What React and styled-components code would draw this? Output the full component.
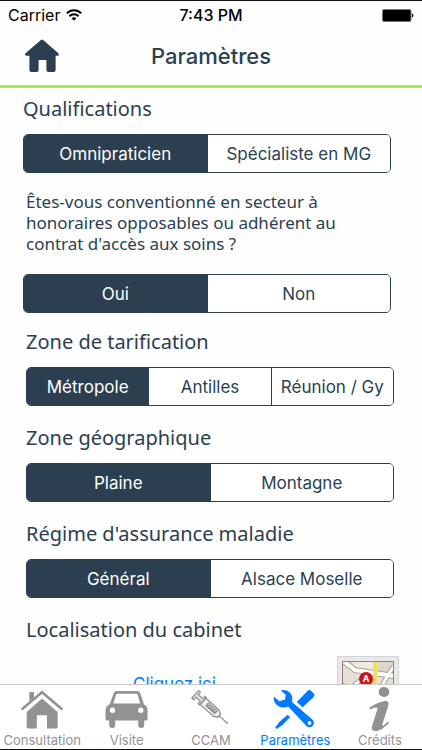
import { useState } from "react";
import styled, { createGlobalStyle } from "styled-components";

const navy = "#2b3f50";
const green = "#a4ec50";
const blue = "#007aff";
const grey = "#929292";

const GlobalStyle = createGlobalStyle`
  * {
    box-sizing: border-box;
  }
  body {
    margin: 0;
    background: #fff;
    font-family: Inter, "Liberation Sans", sans-serif;
  }
  button {
    font-family: inherit;
    cursor: pointer;
  }
`;

const Screen = styled.div`
  display: flex;
  flex-direction: column;
  height: 100vh;
  border-top: 1px solid #111;
  border-bottom: 1px solid #111;
  background: #fefefe;
`;

const StatusBar = styled.div`
  display: grid;
  grid-template-columns: 1fr auto 1fr;
  align-items: center;
  height: 28px;
  padding: 0 8px;
  font-size: 16px;
  color: #000;
`;

const Carrier = styled.div`
  display: flex;
  align-items: center;
  gap: 6px;
`;

const Clock = styled.time`
  font-weight: 500;
`;

const Battery = styled.svg`
  justify-self: end;
`;

const Header = styled.header`
  display: grid;
  grid-template-columns: 36px 1fr 36px;
  align-items: center;
  height: 59px;
  padding: 0 24px 3px;
  border-bottom: 3px solid ${green};
`;

const HomeButton = styled.button`
  display: flex;
  padding: 0;
  border: 0;
  background: none;
  color: ${navy};
`;

const Title = styled.h1`
  margin: 0;
  font-size: 22px;
  line-height: 28px;
  font-weight: 500;
  text-align: center;
  color: ${navy};
`;

const Content = styled.main`
  flex: 1;
  min-height: 0;
  overflow-y: auto;
  scrollbar-width: none;
`;

const Section = styled.section`
  padding: ${(p) => (p.$wide ? "6px 31px 14px 23px" : "0 28px 17px 26px")};
`;

const Heading = styled.h2`
  margin: 0 0 10px;
  font-family: "Noto Sans", "Open Sans", sans-serif;
  font-size: 20px;
  line-height: 30px;
  font-weight: 400;
  color: ${navy};
`;

const Question = styled.p`
  margin: 0;
  padding: 18px 0 20px 3px;
  font-family: "Noto Sans", "Open Sans", sans-serif;
  font-size: 17px;
  line-height: 21px;
  color: ${navy};
`;

const Segments = styled.div`
  display: flex;
  height: 39px;
  border: 1px solid ${navy};
  border-radius: 5px;
  overflow: hidden;
`;

const Segment = styled.button`
  flex: 1 1 0;
  min-width: 0;
  padding: 0;
  border: 0;
  background: ${(p) => (p.$active ? navy : "#fff")};
  color: ${(p) => (p.$active ? "#fff" : navy)};
  font-size: 17px;
  white-space: nowrap;
  & + & {
    border-left: 1px solid ${navy};
  }
`;

const LocationHeading = styled(Heading)`
  margin: 0;
  padding: 0 28px 0 26px;
`;

const LocationRow = styled.div`
  display: flex;
  align-items: center;
  gap: 14px;
  padding: 11px 23px 16px 26px;
`;

const LinkCell = styled.div`
  flex: 1;
  text-align: center;
`;

const Link = styled.a`
  font-size: 17px;
  color: ${blue};
  text-decoration: none;
`;

const MapButton = styled.button`
  display: flex;
  padding: 4px;
  border: 1px solid #d3d3d6;
  background: #e9e9ec;
`;

const TabBar = styled.nav`
  display: flex;
  height: 65px;
  border-top: 1px solid #c9c9c9;
  background: #fff;
`;

const Tab = styled.button`
  flex: 1 1 0;
  min-width: 0;
  display: flex;
  flex-direction: column;
  align-items: center;
  padding: 1px 0 0;
  border: 0;
  background: none;
  color: ${(p) => (p.$active ? blue : grey)};
  font-size: 13px;
  line-height: 16px;
  white-space: nowrap;
`;

const WifiIcon = () => (
  <svg width="16" height="12" viewBox="0 0 16 12" fill="none" stroke="#000" strokeWidth="2">
    <path d="M0.8 4.4C4.8 0.2 11.2 0.2 15.2 4.4" />
    <path d="M3.4 7.2C6 4.6 10 4.6 12.6 7.2" />
    <path d="M5.6 9.2C7 7.9 9 7.9 10.4 9.2L8 11.8Z" fill="#000" stroke="none" />
  </svg>
);

const BatteryIcon = () => (
  <Battery width="32" height="13" viewBox="0 0 32 13">
    <rect x="0.5" y="0.5" width="28.5" height="12" rx="1.5" stroke="#777" />
    <path d="M30 4.5C31.8 4.8 31.8 8.2 30 8.5Z" />
  </Battery>
);

const HomeIcon = () => (
  <svg width="36" height="34" viewBox="0 0 36 34" fill="currentColor">
    <path d="M16.9 0.9Q18 0 19.1 0.9L34.4 14.2Q35.4 15.2 34.6 16.2Q34.2 16.8 33 16.8H31.6V31Q31.6 33 29.6 33H24.4Q22.4 33 22.4 31V21H14.6V31Q14.6 33 12.6 33H7.4Q5.4 33 5.4 31V16.8H3Q1.8 16.8 1.4 16.2Q0.6 15.2 1.6 14.2Z" />
  </svg>
);

const MapIcon = () => (
  <svg width="52" height="46" viewBox="0 0 52 46">
    <rect width="52" height="46" fill="#e6dfd3" />
    <path d="M10 0H31V13L14 9Z" fill="#efeae2" />
    <path d="M37 0H52V14L37 12Z" fill="#ddd6ca" />
    <path d="M0 -1L13 9L52 15" stroke="#a99c96" strokeWidth="6" fill="none" />
    <path d="M0 34L20 18L34 11M28 46L46 14L52 5M0 24L12 30L46 46" stroke="#a99c96" strokeWidth="5" fill="none" />
    <path d="M0 -1L13 9L52 15" stroke="#fff" strokeWidth="4" fill="none" />
    <path d="M0 34L20 18L34 11M28 46L46 14L52 5M0 24L12 30L46 46" stroke="#fff" strokeWidth="3" fill="none" />
    <path d="M33.500 0V13L28 46" stroke="#f3df5c" strokeWidth="4" fill="none" />
    <rect x="0.500" y="0.500" width="51" height="45" fill="none" stroke="#96807c" />
    <circle cx="24" cy="18" r="7" fill="#c5161d" />
    <text x="24" y="21" fill="#fff" fontSize="9" fontWeight="700" textAnchor="middle">
      A
    </text>
  </svg>
);

const TabIcon = ({ children }) => (
  <svg width="44" height="46" viewBox="0 0 44 46" fill="currentColor">
    {children}
  </svg>
);

const tabs = [
  {
    label: "Consultation",
    icon: (
      <>
        <path d="M9.300 15.500V7Q9.300 6 10.300 6H13Q14 6 14 7V11.500Z" />
        <path d="M2.500 22.800L22 6.300L41.500 22.800" fill="none" stroke="currentColor" strokeWidth="2.600" strokeLinecap="round" />
        <path d="M22 12.600L37.700 26V41Q37.700 42.600 36 42.600H27V29.300H16.800V42.600H8.400Q6.700 42.600 6.700 41V26Z" />
      </>
    ),
  },
  {
    label: "Visite",
    icon: (
      <path
        fillRule="evenodd"
        d="M12 5H32Q34.500 5 35.200 7L39 18.500Q42.500 20 42.500 24V33Q42.500 34.600 41 34.600H39.200V39Q39.200 42 36.200 42Q33.200 42 33.200 39V34.600H10.200V39Q10.200 42 7.200 42Q4.200 42 4.200 39V34.600H2Q0.500 34.600 0.500 33V24Q0.500 20 4.500 18.500L8.800 7Q9.500 5 12 5ZM12.300 7.800Q11.300 7.800 11 8.800L8.300 17.400H35.300L32.600 8.800Q32.300 7.800 31.300 7.800ZM4.800 24.300A2.700 2.700 0 1 0 10.200 24.300A2.700 2.700 0 1 0 4.800 24.300ZM33.100 24.300A2.700 2.700 0 1 0 38.500 24.300A2.700 2.700 0 1 0 33.100 24.300Z"
      />
    ),
  },
  {
    label: "CCAM",
    icon: (
      <g transform="translate(7 9) rotate(42)" fill="none" stroke="currentColor" strokeWidth="1.300">
        <path d="M-1 -5H1.500V-1.800H7.500V-5H9.500V5H7.500V1.800H1.500V5H-1Z" fill="#e2e2e2" />
        <path d="M9.500 -4.200H27L31 -2V2L27 4.200H9.500Z" fill="#f2f2f2" />
        <path d="M14 -2.800H27V2H14Z" fill="currentColor" stroke="none" />
        <path d="M15 -1L26 -1" stroke="#ddd" strokeDasharray="1.500 1.500" />
        <path d="M31 0H43" />
      </g>
    ),
  },
  {
    label: "Paramètres",
    icon: (
      <>
        <path d="M7.500 4.600Q13.500 2.800 17.300 7Q20.400 10.600 18.800 15.800L39.600 33.800Q42.200 37 39.600 40Q36.600 42.600 33.400 40L15.200 20.600Q9.800 22.800 5 20Q0 16.700 0.800 10.600L6.400 15.200L12 13.600L12.800 8.800Z" />
        <circle cx="36.500" cy="37" r="1.900" fill="#fff" />
        <path d="M34.200 5.200Q36.200 3.200 38 4.800L41 7.800Q42.300 9.300 40.500 11.200L29.500 21.200L23.800 16Z" />
        <path d="M14.600 28.800L17 31.200L9.500 39L3.600 43L2.200 41.600L6.500 35.800Z" />
      </>
    ),
  },
  {
    label: "Crédits",
    icon: (
      <>
        <ellipse cx="26" cy="6" rx="5.400" ry="5" />
        <path d="M11.200 21.800C17 18 22 15.300 27 14.900C30.800 14.700 31 17 30.200 20L24.300 38.500C23.800 40.200 25 40.300 30 35.400L31 36.700C26 42 21.500 45 17.300 45C13.700 45 13.200 42.700 14.200 39.500L19.500 23C20 21 18.600 20.800 12 23.400Z" />
      </>
    ),
  },
];

const SegmentedControl = ({ label, options }) => {
  const [selected, setSelected] = useState(0);
  return (
    <Segments role="group" aria-label={label}>
      {options.map((option, index) => (
        <Segment
          key={option}
          type="button"
          $active={index === selected}
          aria-pressed={index === selected}
          onClick={() => setSelected(index)}
        >
          {option}
        </Segment>
      ))}
    </Segments>
  );
};

const zones = [
  { title: "Zone de tarification", options: ["Métropole", "Antilles", "Réunion / Gy"] },
  { title: "Zone géographique", options: ["Plaine", "Montagne"] },
  { title: "Régime d'assurance maladie", options: ["Général", "Alsace Moselle"] },
];

const App = () => {
  const [activeTab, setActiveTab] = useState("Paramètres");
  return (
    <Screen>
      <GlobalStyle />
      <StatusBar>
        <Carrier>
          Carrier
          <WifiIcon />
        </Carrier>
        <Clock>7:43 PM</Clock>
        <BatteryIcon />
      </StatusBar>
      <Header>
        <HomeButton type="button" aria-label="Accueil">
          <HomeIcon />
        </HomeButton>
        <Title>Paramètres</Title>
      </Header>
      <Content>
        <Section $wide>
          <Heading>Qualifications</Heading>
          <SegmentedControl label="Qualifications" options={["Omnipraticien", "Spécialiste en MG"]} />
          <Question>
            Êtes-vous conventionné en secteur à honoraires opposables ou adhérent au contrat d'accès aux soins ?
          </Question>
          <SegmentedControl label="Secteur conventionné" options={["Oui", "Non"]} />
        </Section>
        {zones.map(({ title, options }) => (
          <Section key={title}>
            <Heading>{title}</Heading>
            <SegmentedControl label={title} options={options} />
          </Section>
        ))}
        <LocationHeading>Localisation du cabinet</LocationHeading>
        <LocationRow>
          <LinkCell>
            <Link href="#localisation">Cliquez ici</Link>
          </LinkCell>
          <MapButton type="button" aria-label="Carte">
            <MapIcon />
          </MapButton>
        </LocationRow>
      </Content>
      <TabBar>
        {tabs.map(({ label, icon }) => (
          <Tab key={label} type="button" $active={label === activeTab} onClick={() => setActiveTab(label)}>
            <TabIcon>{icon}</TabIcon>
            {label}
          </Tab>
        ))}
      </TabBar>
    </Screen>
  );
};

export default App;
